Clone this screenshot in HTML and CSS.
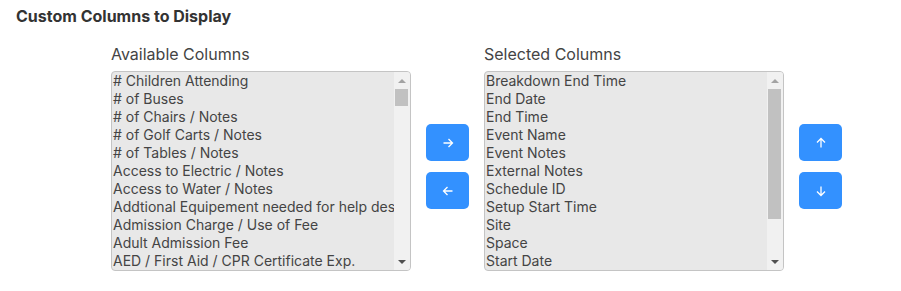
FILE: index.html
```html
<!DOCTYPE html>
<html lang="en">
<head>
    <meta charset="UTF-8">
    <meta name="viewport" content="width=device-width, initial-scale=1.0">
    <title>Custom Columns to Display</title>
    <link rel="stylesheet" href="styles.css">
</head>
<body>
    <div class="container">
        <h2 class="section-title">Custom Columns to Display</h2>
        <div class="picker">
            <div class="picker-col">
                <label class="picker-label">Available Columns</label>
                <div class="list-box">
                    <div class="list-items" id="available">
                        <div class="list-item"># Children Attending</div>
                        <div class="list-item"># of Buses</div>
                        <div class="list-item"># of Chairs / Notes</div>
                        <div class="list-item"># of Golf Carts / Notes</div>
                        <div class="list-item"># of Tables / Notes</div>
                        <div class="list-item">Access to Electric / Notes</div>
                        <div class="list-item">Access to Water / Notes</div>
                        <div class="list-item">Addtional Equipement needed for help desk</div>
                        <div class="list-item">Admission Charge / Use of Fee</div>
                        <div class="list-item">Adult Admission Fee</div>
                        <div class="list-item">AED / First Aid / CPR Certificate Exp.</div>
                    </div>
                    <div class="scrollbar">
                        <span class="scroll-btn up disabled"></span>
                        <div class="scroll-track">
                            <div class="scroll-thumb" style="height: 17px;"></div>
                        </div>
                        <span class="scroll-btn down"></span>
                    </div>
                </div>
            </div>
            <div class="move-buttons">
                <button class="btn" title="Add">
                    <svg width="12" height="12" viewBox="0 0 12 12"><path d="M1.5 6h9M6.5 2l4 4-4 4" fill="none" stroke="#fff" stroke-width="1.3"/></svg>
                </button>
                <button class="btn" title="Remove">
                    <svg width="12" height="12" viewBox="0 0 12 12"><path d="M10.5 6h-9M5.5 2l-4 4 4 4" fill="none" stroke="#fff" stroke-width="1.3"/></svg>
                </button>
            </div>
            <div class="picker-col">
                <label class="picker-label">Selected Columns</label>
                <div class="list-box">
                    <div class="list-items" id="selected">
                        <div class="list-item">Breakdown End Time</div>
                        <div class="list-item">End Date</div>
                        <div class="list-item">End Time</div>
                        <div class="list-item">Event Name</div>
                        <div class="list-item">Event Notes</div>
                        <div class="list-item">External Notes</div>
                        <div class="list-item">Schedule ID</div>
                        <div class="list-item">Setup Start Time</div>
                        <div class="list-item">Site</div>
                        <div class="list-item">Space</div>
                        <div class="list-item">Start Date</div>
                    </div>
                    <div class="scrollbar">
                        <span class="scroll-btn up disabled"></span>
                        <div class="scroll-track">
                            <div class="scroll-thumb" style="height: 130px;"></div>
                        </div>
                        <span class="scroll-btn down"></span>
                    </div>
                </div>
            </div>
            <div class="move-buttons">
                <button class="btn" title="Move up">
                    <svg width="12" height="12" viewBox="0 0 12 12"><path d="M6 10.5v-9M2 5.5l4-4 4 4" fill="none" stroke="#fff" stroke-width="1.3"/></svg>
                </button>
                <button class="btn" title="Move down">
                    <svg width="12" height="12" viewBox="0 0 12 12"><path d="M6 1.5v9M2 6.5l4 4 4-4" fill="none" stroke="#fff" stroke-width="1.3"/></svg>
                </button>
            </div>
        </div>
    </div>
</body>
</html>
```

FILE: styles.css
```css
body {
    font-family: 'Inter', 'Liberation Sans', sans-serif;
    margin: 0;
    padding: 0;
    background-color: #fff;
    color: #333;
}
.container {
    padding: 6px 16px;
}
.section-title {
    margin: 0;
    font-size: 16px;
    line-height: 20px;
    font-weight: 700;
    color: #333;
}
.picker {
    display: flex;
    align-items: flex-start;
    padding-left: 95px;
    margin-top: 18px;
}
.picker-col {
    display: flex;
    flex-direction: column;
}
.picker-label {
    font-size: 16px;
    line-height: 20px;
    color: #444;
    margin-bottom: 7px;
}
.list-box {
    display: flex;
    width: 298px;
    height: 198px;
    border: 1px solid #c4c4c4;
    border-radius: 4px;
    background-color: #e8e8e8;
    overflow: hidden;
}
.list-items {
    flex: 1;
    min-width: 0;
    overflow: hidden;
}
.list-item {
    font-size: 14px;
    line-height: 18px;
    padding: 0 1px;
    color: #444;
    white-space: nowrap;
    overflow: hidden;
}
/* fake classic scrollbar */
.scrollbar {
    width: 16px;
    display: flex;
    flex-direction: column;
    background-color: #f1f1f1;
}
.scroll-btn {
    height: 17px;
    display: flex;
    align-items: center;
    justify-content: center;
}
.scroll-btn::before {
    content: '';
    border-left: 4px solid transparent;
    border-right: 4px solid transparent;
}
.scroll-btn.up::before {
    border-bottom: 4px solid #505050;
}
.scroll-btn.down::before {
    border-top: 4px solid #505050;
}
.scroll-btn.disabled::before {
    border-bottom-color: #a3a3a3;
}
.scroll-track {
    flex: 1;
    padding: 0 2px 0 1px;
}
.scroll-thumb {
    background-color: #c1c1c1;
}
.move-buttons {
    display: flex;
    flex-direction: column;
    gap: 11px;
    margin: 80px 15px 0;
}
.btn {
    width: 43px;
    height: 37px;
    border: none;
    border-radius: 5px;
    background-color: #3391ff;
    cursor: pointer;
    display: flex;
    align-items: center;
    justify-content: center;
    padding: 0;
}
.btn:hover {
    background-color: #1f80f0;
}
```
